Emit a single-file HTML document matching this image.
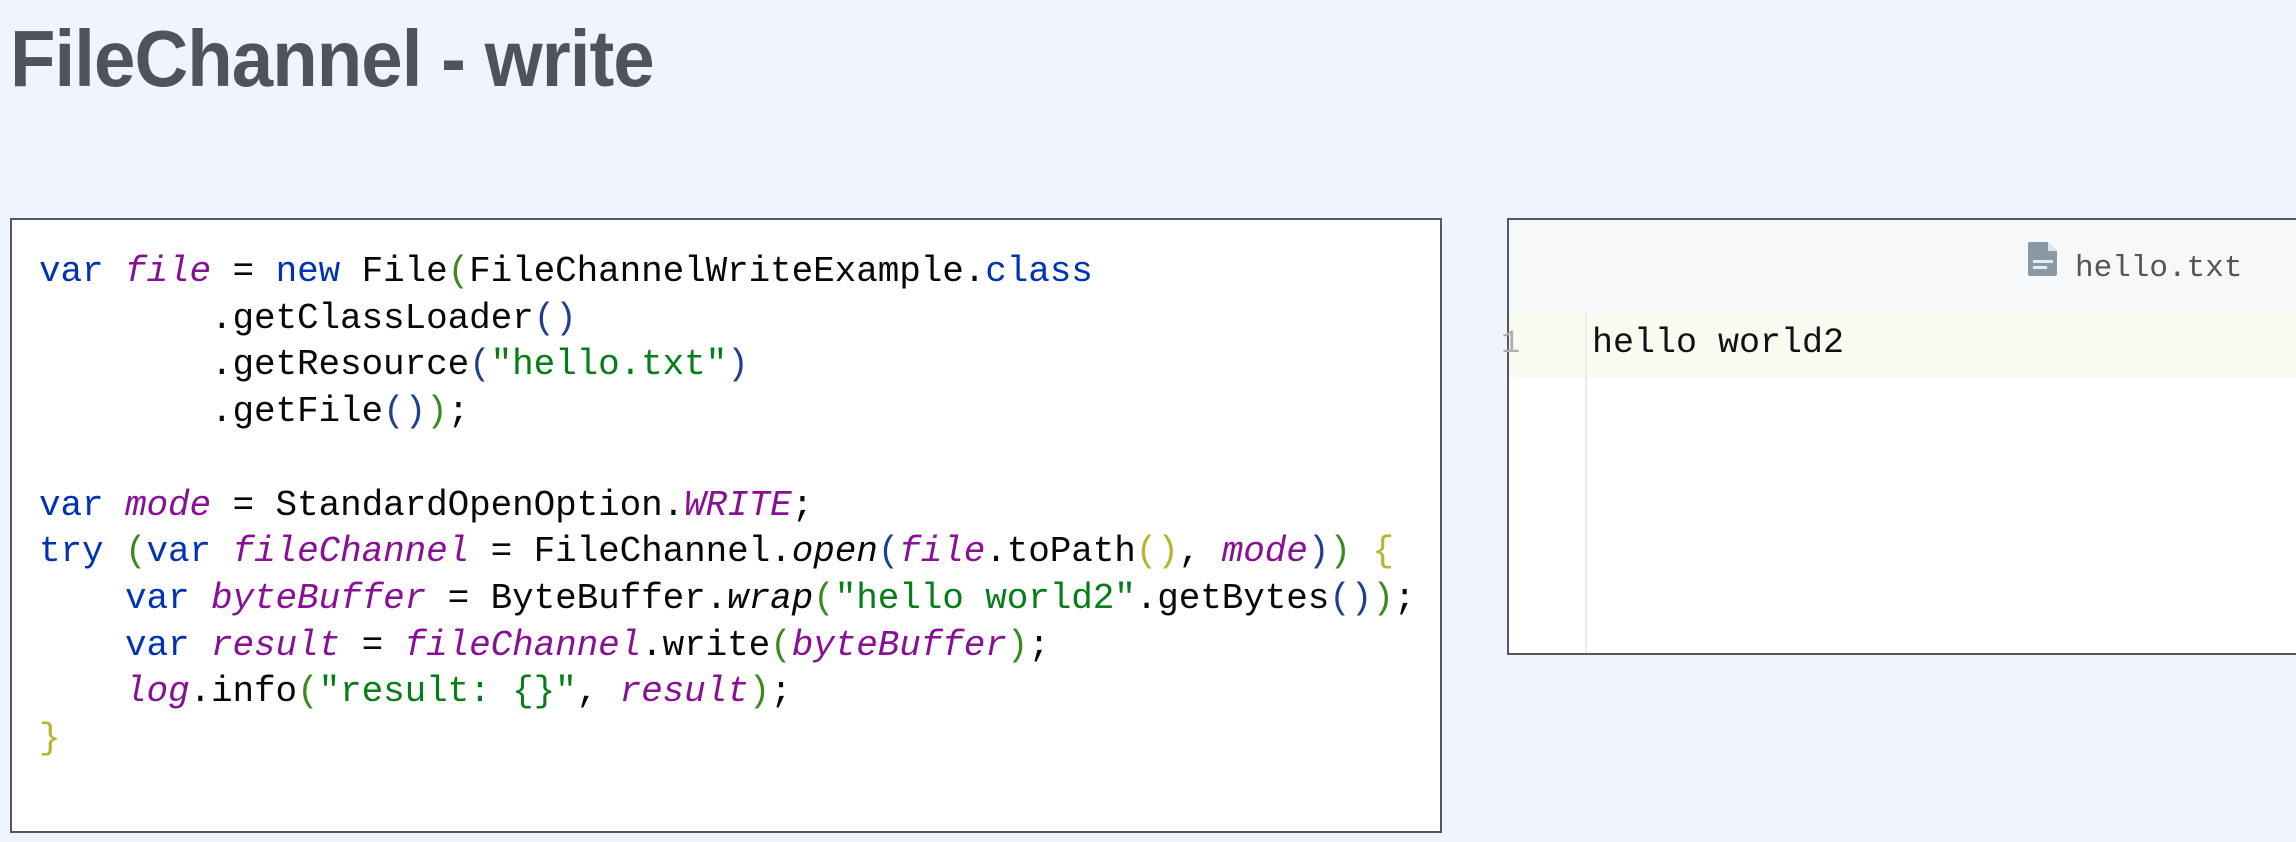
<!DOCTYPE html>
<html><head><meta charset="utf-8"><style>
html,body{margin:0;padding:0;width:2296px;height:842px;overflow:hidden;background:#f0f4fe;}
h1{position:absolute;left:10px;top:19px;margin:0;font:bold 80px/1 "Liberation Sans",sans-serif;color:#4f535c;letter-spacing:-1px;transform:scaleX(0.93);transform-origin:left top;white-space:nowrap;}
.code{position:absolute;left:10px;top:218px;width:1432px;height:615px;background:#fff;border:2px solid #55585e;box-sizing:border-box;}
pre{position:absolute;left:27px;top:29px;margin:0;font:36px/46.7px "Liberation Mono",monospace;color:#080808;letter-spacing:-0.1px;}
.k{color:#0033b3}.v{color:#871094;font-style:italic}.s{color:#067d17}.y{color:#b5b52a}.p{color:#1f3f8f}.g{color:#3d8a1c}.i{font-style:italic}
.ed{position:absolute;left:1507px;top:218px;width:800px;height:437px;background:#fff;border:2px solid #55585e;box-sizing:border-box;}
.hd{position:absolute;left:0;top:0;right:0;height:94px;background:#f7f8fa;}
.hl{position:absolute;left:0;top:94px;right:0;height:64px;background:#fafaf0;}
.gl{position:absolute;left:76px;top:94px;bottom:0;width:2px;background:#ebebeb;}
.tx{position:absolute;left:83px;top:103px;font:35px "Liberation Mono",monospace;color:#111;}
.ln{position:absolute;left:-8px;top:105px;font:32px "Liberation Mono",monospace;color:#b0b0b0;}
.tab{position:absolute;left:566px;top:31px;font:31px "Liberation Mono",monospace;color:#555;}
</style></head><body>
<h1>FileChannel - write</h1>
<div class="code"><pre><span class="k">var</span> <span class="v">file</span> = <span class="k">new</span> File<span class="g">(</span>FileChannelWriteExample.<span class="k">class</span>
        .getClassLoader<span class="p">()</span>
        .getResource<span class="p">(</span><span class="s">"hello.txt"</span><span class="p">)</span>
        .getFile<span class="p">()</span><span class="g">)</span>;

<span class="k">var</span> <span class="v">mode</span> = StandardOpenOption.<span class="v">WRITE</span>;
<span class="k">try</span> <span class="g">(</span><span class="k">var</span> <span class="v">fileChannel</span> = FileChannel.<span class="i">open</span><span class="p">(</span><span class="v">file</span>.toPath<span class="y">()</span>, <span class="v">mode</span><span class="p">)</span><span class="g">)</span> <span class="y">{</span>
    <span class="k">var</span> <span class="v">byteBuffer</span> = ByteBuffer.<span class="i">wrap</span><span class="g">(</span><span class="s">"hello world2"</span>.getBytes<span class="p">()</span><span class="g">)</span>;
    <span class="k">var</span> <span class="v">result</span> = <span class="v">fileChannel</span>.write<span class="g">(</span><span class="v">byteBuffer</span><span class="g">)</span>;
    <span class="v">log</span>.info<span class="g">(</span><span class="s">"result: {}"</span>, <span class="v">result</span><span class="g">)</span>;
<span class="y">}</span></pre></div>
<div class="ed"><div class="hd"></div>
<svg style="position:absolute;left:518px;top:21px" width="32" height="36" viewBox="0 0 32 36"><path d="M3 1h18l9 9v23a2 2 0 0 1-2 2H3a2 2 0 0 1-2-2V3a2 2 0 0 1 2-2z" fill="#8a99a6"/><path d="M21 1v9h9z" fill="#dfe4e8"/><rect x="6" y="19" width="20" height="3" fill="#e6eaee"/><rect x="6" y="25" width="14" height="3" fill="#e6eaee"/></svg>
<div class="tab">hello.txt</div>
<div class="hl"></div><div class="gl"></div><div class="ln">1</div><div class="tx">hello world2</div></div>
</body></html>
